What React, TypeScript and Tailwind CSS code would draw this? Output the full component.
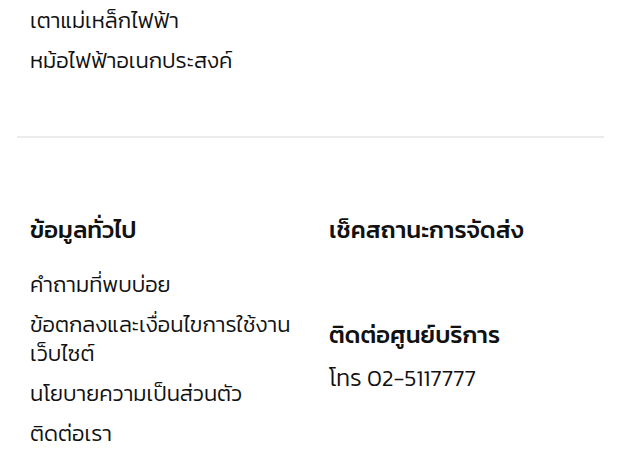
const info = [
  'คำถามที่พบบ่อย',
  'ข้อตกลงและเงื่อนไขการใช้งานเว็บไซต์',
  'นโยบายความเป็นส่วนตัว',
  'ติดต่อเรา',
];

export default function App() {
  return (
    <div className="w-[621px] h-[456px] overflow-hidden bg-white text-[#111] font-['Kanit','Noto_Sans_Thai',sans-serif] font-light">
      {/* หมวดสินค้า (ต่อจากด้านบน) */}
      <ul className="px-[30px] pt-[6px] flex flex-col gap-[11px] text-[22px] leading-[29px]">
        <li>เตาแม่เหล็กไฟฟ้า</li>
        <li>หม้อไฟฟ้าอเนกประสงค์</li>
      </ul>

      <div className="mx-[17px] mt-[61px] h-[2px] bg-[#ebebeb]" />

      <div className="px-[30px] pt-[76px] grid grid-cols-[299px_1fr]">
        {/* ข้อมูลทั่วไป */}
        <div>
          <h3 className="text-[24px] font-medium leading-[32px]">ข้อมูลทั่วไป</h3>
          <ul className="mt-[24px] flex flex-col gap-[11px] text-[22px] leading-[29px] w-[268px]">
            {info.map((t) => (
              <li key={t}>{t}</li>
            ))}
          </ul>
        </div>

        {/* จัดส่ง / ติดต่อ */}
        <div>
          <h3 className="text-[24px] font-medium leading-[32px]">เช็คสถานะการจัดส่ง</h3>
          <h3 className="mt-[73px] text-[24px] font-medium leading-[32px]">ติดต่อศูนย์บริการ</h3>
          <p className="mt-[13px] text-[23px] leading-[29px]">โทร 02-5117777</p>
        </div>
      </div>
    </div>
  );
}
